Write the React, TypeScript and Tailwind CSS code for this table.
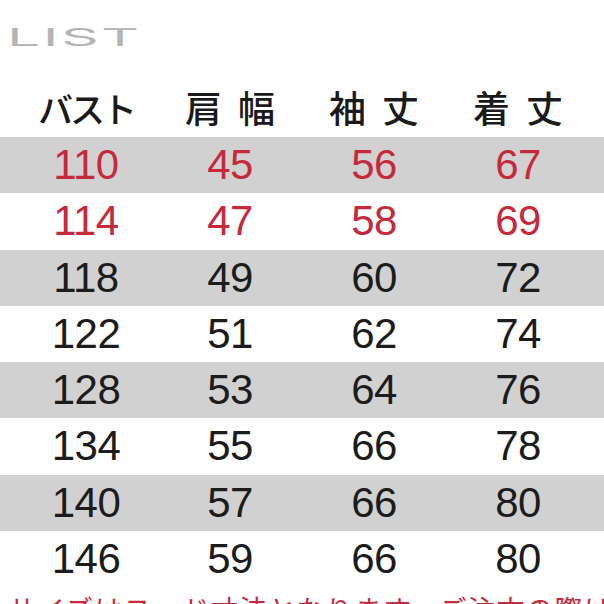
import React from "react";

const rows: { v: string[]; red?: boolean }[] = [
  { v: ["110", "45", "56", "67"], red: true },
  { v: ["114", "47", "58", "69"], red: true },
  { v: ["118", "49", "60", "72"] },
  { v: ["122", "51", "62", "74"] },
  { v: ["128", "53", "64", "76"] },
  { v: ["134", "55", "66", "78"] },
  { v: ["140", "57", "66", "80"] },
  { v: ["146", "59", "66", "80"] },
];

export default function App() {
  return (
    <div className="w-[604px] h-[604px] overflow-hidden bg-white relative">
      <div className="h-[74px] pl-[7px] pt-[23px]">
        <div
          className="origin-left scale-x-[2.45] text-[24px] leading-[30px] font-normal tracking-[1px] text-[#b5b5b5]"
          style={{ fontFamily: "Inter, 'Liberation Sans', sans-serif" }}
        >
          LIST
        </div>
      </div>
      <div
        className="h-[63px] pl-[14px] grid grid-cols-[144px_144px_144px_144px] items-center pt-[4px] text-[#1a1a1a] font-medium"
        style={{ fontFamily: "'Noto Sans CJK JP', 'Noto Sans', sans-serif" }}
      >
        <div className="text-center text-[35px] leading-none tracking-[-3px]">バスト</div>
        <div className="text-center text-[37px] leading-none tracking-[16px] pl-[16px]">肩幅</div>
        <div className="text-center text-[37px] leading-none tracking-[16px] pl-[16px]">袖丈</div>
        <div className="text-center text-[37px] leading-none tracking-[16px] pl-[16px]">着丈</div>
      </div>
      <div style={{ fontFamily: "'Liberation Sans', Arial, sans-serif" }}>
        {rows.map((r, i) => (
          <div
            key={i}
            className={
              "h-[56.25px] pl-[14px] grid grid-cols-[144px_144px_144px_144px] items-center text-[42px] leading-none tracking-[-0.5px] " +
              (i % 2 === 0 ? "bg-[#d1d1d1] " : "bg-white ") +
              (r.red ? "text-[#c42a3c]" : "text-[#1c1c1c]")
            }
          >
            {r.v.map((x, j) => (
              <div key={j} className="text-center">
                {x}
              </div>
            ))}
          </div>
        ))}
      </div>
      <div
        className="pt-[6px] pl-[8px] whitespace-nowrap text-[28px] leading-[32px] tracking-[1px] text-[#c42a3c]"
        style={{ fontFamily: "'Noto Sans CJK JP', sans-serif" }}
      >
        サイズはヌード寸法となります。ご注文の際はご注意ください
      </div>
    </div>
  );
}
